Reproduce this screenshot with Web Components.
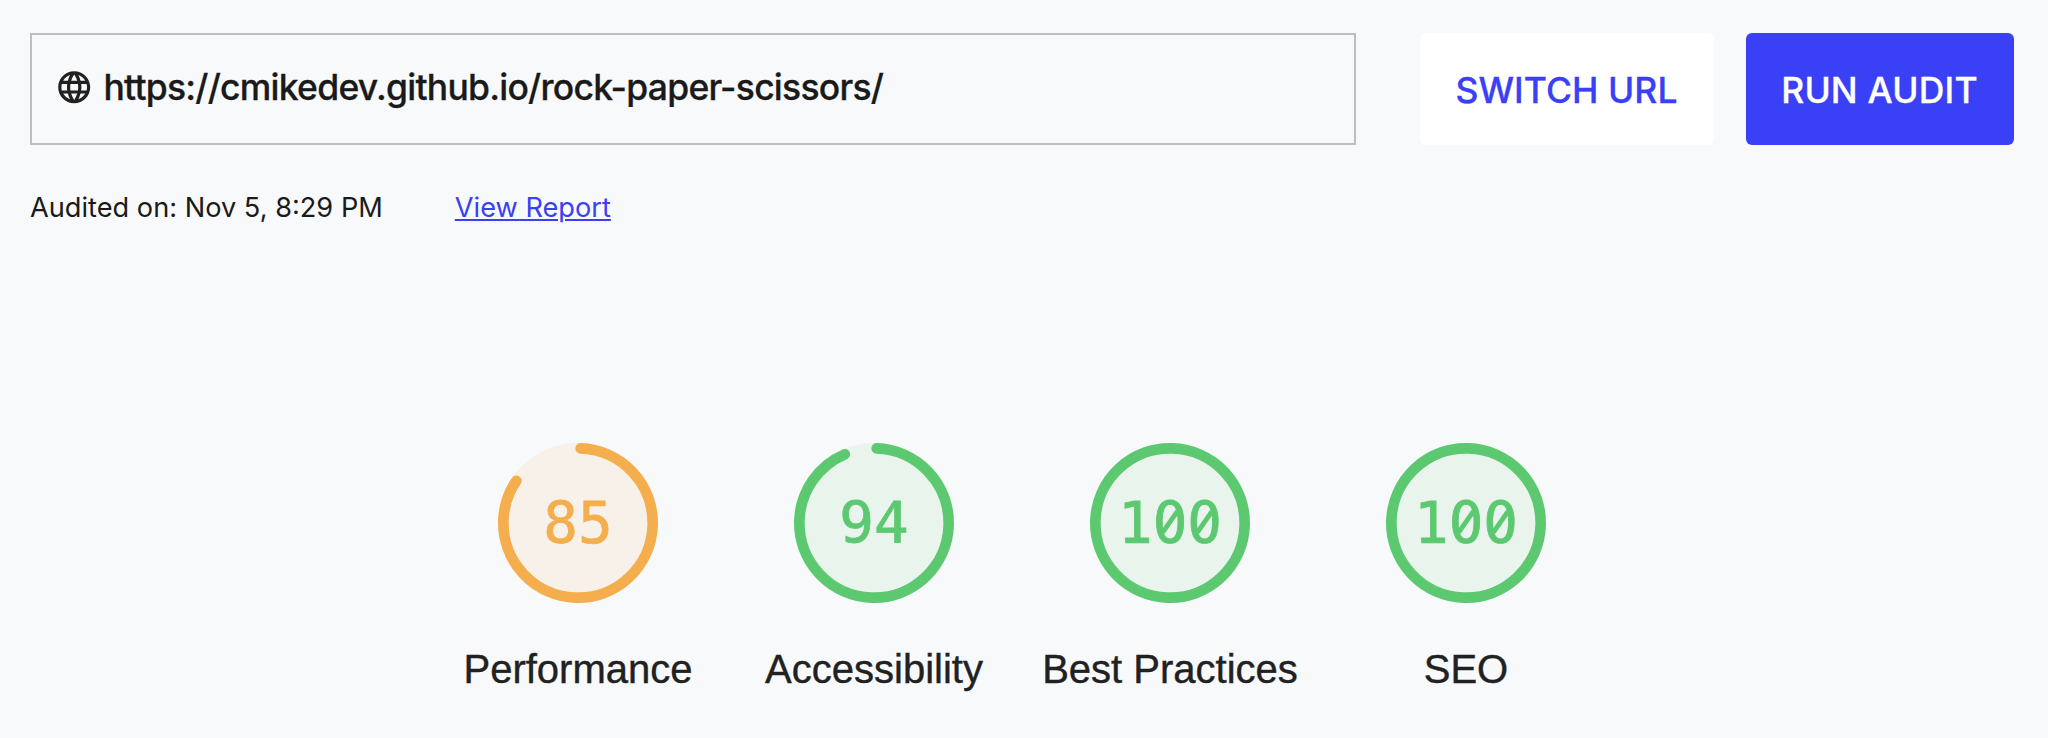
<!DOCTYPE html>
<html lang="en">
<head>
<meta charset="utf-8">
<title>Site audit</title>
<style>
  html, body { margin: 0; height: 100%; }
  body { background: #f8f9fb; color: #1a1a1a; font-family: Inter, "Liberation Sans", sans-serif; overflow: hidden; }
</style>
</head>
<body>
<audit-page>
  <url-box slot="toolbar">https://cmikedev.github.io/rock-paper-scissors/</url-box>
  <action-button slot="actions" style="width:294px">SWITCH URL</action-button>
  <action-button slot="actions" variant="primary" style="width:268px">RUN AUDIT</action-button>
  <audit-meta slot="meta" href="#report">Audited on: Nov 5, 8:29 PM</audit-meta>
  <score-gauge slot="scores" score="85">Performance</score-gauge>
  <score-gauge slot="scores" score="94">Accessibility</score-gauge>
  <score-gauge slot="scores" score="100">Best Practices</score-gauge>
  <score-gauge slot="scores" score="100">SEO</score-gauge>
</audit-page>

<script>
class AuditPage extends HTMLElement {
  constructor() {
    super();
    this.attachShadow({ mode: 'open' }).innerHTML = `
      <style>
        :host { display: flex; flex-direction: column; height: 738px; box-sizing: border-box; padding: 33px 34px 0 30px; }
        header { display: flex; height: 112px; gap: 64px; }
        .actions { display: flex; gap: 32px; }
        main { display: grid; grid-template-columns: repeat(4, 296px); justify-content: center; margin: 218px 0 0 0; }
      </style>
      <header>
        <slot name="toolbar"></slot>
        <div class="actions"><slot name="actions"></slot></div>
      </header>
      <slot name="meta"></slot>
      <main><slot name="scores"></slot></main>`;
  }
}

class UrlBox extends HTMLElement {
  constructor() {
    super();
    this.attachShadow({ mode: 'open' }).innerHTML = `
      <style>
        :host { display: flex; flex: 1; align-items: center; gap: 10.3px; box-sizing: border-box;
          border: 2px solid #bdbec3; padding: 0 22px 4px 22.8px;
          font-size: 35.5px; font-weight: 500; line-height: 44px; letter-spacing: -.75px; white-space: nowrap; }
        svg { width: 38.4px; height: 38.4px; flex: none; fill: #212121; }
        span { padding-top: 2px; -webkit-text-stroke: .3px currentColor; }
      </style>
      <svg viewBox="0 0 24 24" aria-hidden="true"><path d="M11.99 2C6.47 2 2 6.48 2 12s4.47 10 9.99 10C17.52 22 22 17.52 22 12S17.52 2 11.99 2zm6.93 6h-2.95c-.32-1.25-.78-2.45-1.38-3.56 1.84.63 3.37 1.91 4.33 3.56zM12 4.04c.83 1.2 1.48 2.53 1.91 3.96h-3.82c.43-1.43 1.08-2.76 1.91-3.96zM4.26 14C4.1 13.36 4 12.69 4 12s.1-1.36.26-2h3.38c-.08.66-.14 1.32-.14 2 0 .68.06 1.34.14 2H4.26zm.82 2h2.95c.32 1.25.78 2.45 1.38 3.56-1.84-.63-3.37-1.9-4.33-3.56zm2.95-8H5.08c.96-1.66 2.49-2.93 4.33-3.56C8.81 5.55 8.35 6.75 8.03 8zM12 19.96c-.83-1.2-1.48-2.53-1.91-3.96h3.82c-.43 1.43-1.08 2.76-1.91 3.96zM14.34 14H9.66c-.09-.66-.16-1.32-.16-2 0-.68.07-1.35.16-2h4.68c.09.65.16 1.32.16 2 0 .68-.07 1.34-.16 2zm.25 5.56c.6-1.11 1.06-2.31 1.38-3.56h2.95c-.96 1.65-2.49 2.93-4.33 3.56zM16.36 14c.08-.66.14-1.32.14-2 0-.68-.06-1.34-.14-2h3.38c.16.64.26 1.31.26 2s-.1 1.36-.26 2h-3.38z"/></svg>
      <span><slot></slot></span>`;
  }
}

class ActionButton extends HTMLElement {
  constructor() {
    super();
    this.attachShadow({ mode: 'open' }).innerHTML = `
      <style>
        :host { display: flex; }
        button { flex: 1; border: 0; border-radius: 6px; padding: 4px 1px 0 0; margin: 0; background: #fff; color: #3a40f5;
          font: 500 35.5px/44px Inter, "Liberation Sans", sans-serif; letter-spacing: .05px; white-space: nowrap;
          -webkit-text-stroke: .3px currentColor; }
        :host([variant=primary]) button { background: #3a40f5; color: #fff; letter-spacing: .2px; }
      </style>
      <button type="button"><slot></slot></button>`;
  }
}

class AuditMeta extends HTMLElement {
  constructor() {
    super();
    this.attachShadow({ mode: 'open' }).innerHTML = `
      <style>
        :host { display: flex; gap: 72px; margin-top: 46px; font-size: 27.2px; line-height: 34px; height: 34px; white-space: nowrap; }
        a { color: #3a40f5; text-decoration: underline; text-decoration-thickness: 2px; text-underline-offset: 2px; }
      </style>
      <span><slot></slot></span><a>View Report</a>`;
    this.shadowRoot.querySelector('a').href = this.getAttribute('href') || '#';
  }
}

class ScoreGauge extends HTMLElement {
  connectedCallback() {
    if (this.shadowRoot) return;
    const score = Number(this.getAttribute('score'));
    const color = score >= 90 ? '#5cc971' : '#f4ae4d';
    const track = score >= 90 ? '#e8f4ec' : '#f8f1e9';
    const r = 224 / 3, w = 32 / 3;
    const length = 2 * Math.PI * r;
    const arc = score === 100 ? length : length * score / 100 - w / 2;
    const turn = -90 + 0.25 * w / length * 360;

    // Slashed zeros: the font's dotted counter is cleared and crossed with a diagonal bar.
    const digits = String(score);
    const advance = 34.67;
    let slashes = '';
    [...digits].forEach((d, i) => {
      if (d !== '0') return;
      const x = 80 + (i - (digits.length - 1) / 2) * advance;
      slashes += `<ellipse cx="${x}" cy="79" rx="5.4" ry="8" fill="${track}"/>
        <path d="M${x - 7.3} 89.3L${x + 7.3} 68.3" stroke="${color}" stroke-width="4.8"/>`;
    });

    this.attachShadow({ mode: 'open' }).innerHTML = `
      <style>
        :host { display: flex; flex-direction: column; align-items: center; gap: 43px; color: #212121;
          font: 40px/46px "Liberation Sans", Arial, sans-serif; white-space: nowrap; }
        svg { display: block; width: 160px; height: 160px; }
        text { font: 57.6px "DejaVu Sans Mono", monospace; }
        span { -webkit-text-stroke: .4px currentColor; }
      </style>
      <svg viewBox="0 0 160 160">
        <circle cx="80" cy="80" r="80" fill="${track}"/>
        <circle cx="80" cy="80" r="${r}" fill="none" stroke="${color}" stroke-width="${w}" stroke-linecap="round"
          stroke-dasharray="${arc} ${length}" transform="rotate(${turn} 80 80)"/>
        <text x="80" y="100" text-anchor="middle" fill="${color}" stroke="${color}" stroke-width=".8">${digits}</text>
        ${slashes}
      </svg>
      <span><slot></slot></span>`;
  }
}

customElements.define('audit-page', AuditPage);
customElements.define('url-box', UrlBox);
customElements.define('action-button', ActionButton);
customElements.define('audit-meta', AuditMeta);
customElements.define('score-gauge', ScoreGauge);
</script>
</body>
</html>
